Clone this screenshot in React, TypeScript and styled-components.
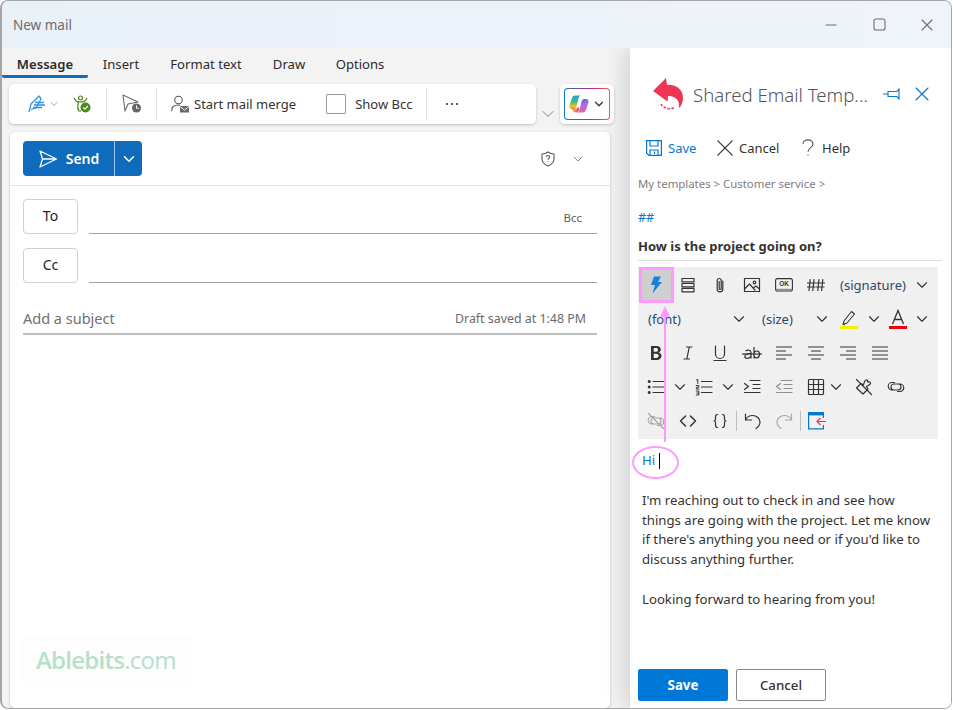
import React from "react";
import styled, { createGlobalStyle } from "styled-components";
import { ChevronDown } from "lucide-react";

const FONT = `"Noto Sans", "Open Sans", "Liberation Sans", sans-serif`;
const BLUE = "#0f6cbd";
const PANEL_BLUE = "#0078d7";
const INK = "#333333";

const GlobalStyle = createGlobalStyle`
  html, body {
    margin: 0;
    padding: 0;
    background: #ffffff;
    font-family: ${FONT};
    overflow: hidden;
  }
  * { box-sizing: border-box; }
`;

const Win = styled.div`
  position: relative;
  width: 952px;
  height: 709px;
  border: 1px solid #a6a6a6;
  border-left-width: 2px;
  border-radius: 8px;
  overflow: hidden;
  background: #f3f3f3;
  display: flex;
  flex-direction: column;
`;

const TitleBar = styled.div`
  height: 47px;
  flex: none;
  display: flex;
  align-items: center;
  padding: 0 0 0 11px;
  background: linear-gradient(90deg, #e9f1f8 0%, #eff3fa 100%);
`;

const WinTitle = styled.div`
  flex: 1;
  font-size: 13.5px;
  color: #6b6b6b;
`;

const WinBtn = styled.div`
  width: 48px;
  height: 24px;
  display: flex;
  align-items: center;
  justify-content: center;
  color: #6e6e6e;
`;

const Main = styled.div`
  flex: 1;
  display: flex;
  min-height: 0;
  overflow: hidden;
`;

const Left = styled.div`
  width: 628px;
  flex: none;
  display: flex;
  flex-direction: column;
`;

const Tabs = styled.div`
  height: 30px;
  display: flex;
  flex: none;
`;

const Tab = styled.div<{ $active?: boolean; $w: number }>`
  width: ${(p) => p.$w}px;
  height: 30px;
  display: flex;
  align-items: center;
  justify-content: center;
  padding-top: 5px;
  font-size: 13.1px;
  color: #2b2b2b;
  font-weight: ${(p) => (p.$active ? 600 : 400)};
  border-bottom: 3px solid ${(p) => (p.$active ? BLUE : "transparent")};
  border-radius: 0 0 2px 2px;
`;

const RibbonRow = styled.div`
  display: flex;
  align-items: flex-start;
  height: 40px;
  margin: 6px 0 8px 7px;
  flex: none;
`;

const Ribbon = styled.div`
  width: 527px;
  height: 40px;
  background: #ffffff;
  border-radius: 5px;
  box-shadow: 0 1px 3px rgba(0, 0, 0, 0.2);
  display: flex;
  align-items: center;
`;

const RibbonSlot = styled.div<{ $w: number; $ml?: number }>`
  width: ${(p) => p.$w}px;
  margin-left: ${(p) => p.$ml ?? 0}px;
  height: 100%;
  flex: none;
  display: flex;
  align-items: center;
  justify-content: center;
`;

const RibbonSep = styled.div`
  width: 1px;
  height: 32px;
  flex: none;
  background: #e2e2e2;
`;

const RibbonText = styled.span`
  font-size: 13px;
  color: #333;
  white-space: nowrap;
`;

const BccBox = styled.span`
  width: 20px;
  height: 20px;
  margin-right: 9px;
  border: 1px solid #999;
  border-radius: 1px;
`;

const Overflow = styled.div`
  width: 24px;
  height: 40px;
  flex: none;
  display: flex;
  align-items: flex-end;
  justify-content: center;
  color: #6a6a6a;
`;

const CopilotCard = styled.div`
  width: 54px;
  height: 40px;
  background: #fff;
  border-radius: 5px;
  box-shadow: 0 1px 3px rgba(0, 0, 0, 0.2);
  padding: 4px;
`;

const CopilotInner = styled.div`
  width: 46px;
  height: 32px;
  border-radius: 4px;
  border: 1px solid transparent;
  background:
    linear-gradient(#fff, #fff) padding-box,
    linear-gradient(90deg, #0f78d4, #b0278f 55%, #f2545b) border-box;
  display: flex;
  align-items: center;
  justify-content: center;
  gap: 3px;
  color: #333;
`;

const Composer = styled.div`
  position: relative;
  width: 600px;
  flex: 1;
  margin: 0 0 0 8px;
  background: #fff;
  border-radius: 5px;
  box-shadow: 0 1px 3px rgba(0, 0, 0, 0.2);
  overflow: hidden;
  padding: 0 13px;
`;

const SendRow = styled.div`
  height: 54px;
  margin: 0 -13px;
  padding: 9px 24px 0 13px;
  border-bottom: 1px solid #e1e1e1;
  display: flex;
  align-items: flex-start;
`;

const SendBtn = styled.div`
  width: 119px;
  height: 35px;
  border-radius: 4px;
  background: ${BLUE};
  color: #fff;
  display: flex;
  align-items: center;
  font-size: 14px;
  font-weight: 600;
`;

const SendMain = styled.div`
  width: 92px;
  height: 100%;
  display: flex;
  align-items: center;
  justify-content: center;
  gap: 8px;
  border-right: 1px solid #9cc3e6;
`;

const SendArrow = styled.div`
  flex: 1;
  display: flex;
  align-items: center;
  justify-content: center;
`;

const ShieldWrap = styled.div`
  margin-left: auto;
  height: 35px;
  display: flex;
  align-items: center;
  gap: 14px;
  color: #6a6a6a;
`;

const RecipientRow = styled.div<{ $first?: boolean }>`
  display: flex;
  height: 35px;
  margin-top: ${(p) => (p.$first ? 13 : 14)}px;
  gap: 11px;
`;

const RecipientBtn = styled.div`
  width: 55px;
  height: 35px;
  padding-bottom: 2px;
  border: 1px solid #d1d1d1;
  border-radius: 4px;
  display: flex;
  align-items: center;
  justify-content: center;
  font-size: 14px;
  color: #242424;
`;

const RecipientField = styled.div`
  flex: 1;
  height: 35px;
  border-bottom: 1.5px solid #a3a3a3;
  display: flex;
  justify-content: flex-end;
  padding: 11px 15px 0 0;
  font-size: 11.5px;
  color: #5c5c5c;
`;

const SubjectRow = styled.div`
  margin-top: 17px;
  height: 35px;
  padding: 3px 11px 0 0;
  display: flex;
  align-items: center;
  justify-content: space-between;
  border-bottom: 2px solid #bdbdbd;
`;

const SubjectHint = styled.span`
  font-size: 14.5px;
  color: #717171;
`;

const DraftNote = styled.span`
  font-size: 12.4px;
  color: #6a6a6a;
`;

const Watermark = styled.div`
  position: absolute;
  left: 12px;
  bottom: 26px;
  width: 171px;
  height: 46px;
  padding-left: 14px;
  background: #fdfdfd;
  display: flex;
  align-items: center;
  font-family: "Open Sans", sans-serif;
  font-size: 24px;
  letter-spacing: -0.75px;
  color: #b5e0cb;
`;

const WatermarkBold = styled.span`
  font-weight: 600;
`;

const Panel = styled.div`
  position: relative;
  flex: 1;
  background: #fff;
  box-shadow: -8px 0 18px rgba(0, 0, 0, 0.11);
  display: flex;
  flex-direction: column;
  padding: 0 8px;
`;

const PanelHead = styled.div`
  height: 88px;
  flex: none;
  display: flex;
  align-items: center;
  padding-left: 14px;
  padding-top: 4px;
`;

const PanelTitle = styled.div`
  flex: 1;
  margin-left: 9px;
  font-size: 18.6px;
  font-weight: 300;
  color: #555555;
  white-space: nowrap;
`;

const HeadIcons = styled.div`
  display: flex;
  align-items: center;
  gap: 14px;
  margin-right: 14px;
`;

const Actions = styled.div`
  height: 24px;
  margin-bottom: 16px;
  flex: none;
  display: flex;
  align-items: center;
  padding-left: 8px;
`;

const Action = styled.div<{ $w: number; $blue?: boolean }>`
  width: ${(p) => p.$w}px;
  display: flex;
  align-items: center;
  gap: 6px;
  font-size: 13px;
  color: ${(p) => (p.$blue ? PANEL_BLUE : INK)};
`;

const HelpLabel = styled.span`
  margin-left: 2px;
`;

const Crumbs = styled.div`
  font-size: 11.4px;
  line-height: 16px;
  color: #7d7d7d;
`;

const Hash = styled.div`
  margin-top: 18px;
  font-size: 12.5px;
  line-height: 16px;
  color: ${PANEL_BLUE};
`;

const Subject = styled.div`
  margin-top: 7px;
  height: 28px;
  padding-top: 4px;
  width: 304px;
  border-bottom: 1px solid #dddddd;
  font-size: 13px;
  font-weight: 700;
  color: ${INK};
`;

const Editor = styled.div`
  margin-top: 6px;
  width: 300px;
  height: 172px;
  flex: none;
  background: #f0f0f0;
  padding: 1px 2px;
`;

const EdRow = styled.div`
  height: 34px;
  display: flex;
  align-items: center;
`;

const Cell = styled.div<{ $w?: number; $ml?: number; $on?: boolean; $off?: boolean }>`
  width: ${(p) => p.$w ?? 32}px;
  height: 34px;
  flex: none;
  margin-left: ${(p) => p.$ml ?? 0}px;
  display: flex;
  align-items: center;
  justify-content: center;
  color: ${(p) => (p.$off ? "#a6a6a6" : "#333")};
  background: ${(p) => (p.$on ? "#cfcfcf" : "transparent")};

  svg {
    flex: none;
  }
`;

const Drop = styled.div<{ $w: number; $pl: number }>`
  width: ${(p) => p.$w}px;
  padding-left: ${(p) => p.$pl}px;
  flex: none;
  font-size: 13px;
  color: #2b4a6b;
  white-space: nowrap;
`;

const EdSep = styled.div`
  width: 1px;
  height: 20px;
  flex: none;
  background: #bdbdbd;
`;

const Body = styled.div`
  padding: 12px 0 0 4px;
  font-size: 13.2px;
  line-height: 19.7px;
  color: #333;
`;

const HiLine = styled.div`
  display: flex;
  align-items: center;
  height: 20px;
  margin-bottom: 20px;
  color: ${PANEL_BLUE};
`;

const Caret = styled.span`
  width: 1px;
  height: 16px;
  margin-left: 4px;
  background: #000;
`;

const Spaced = styled.p`
  margin: 0 0 19.7px;
  white-space: nowrap;
`;

const Footer = styled.div`
  margin-top: auto;
  margin-bottom: 7px;
  display: flex;
  gap: 8px;
`;

const FootBtn = styled.div<{ $primary?: boolean }>`
  width: 90px;
  height: 32px;
  border-radius: 2px;
  display: flex;
  align-items: center;
  justify-content: center;
  font-size: 13.3px;
  font-weight: ${(p) => (p.$primary ? 700 : 500)};
  color: ${(p) => (p.$primary ? "#fff" : "#333")};
  background: ${(p) => (p.$primary ? PANEL_BLUE : "#fff")};
  border: 1px solid ${(p) => (p.$primary ? PANEL_BLUE : "#8a8a8a")};
`;

/* pink annotations drawn over the task pane */
const MarkBox = styled.div`
  position: absolute;
  left: 9px;
  top: 219px;
  width: 35px;
  height: 36px;
  border: 3px solid #ff99ff;
`;

const MarkArrow = styled.svg`
  position: absolute;
  left: 27px;
  top: 258px;
  pointer-events: none;
`;

const MarkOval = styled.div`
  position: absolute;
  left: 2px;
  top: 398px;
  width: 47px;
  height: 33px;
  border: 2px solid #ff99ff;
  border-radius: 50%;
`;

type IconProps = { size?: number; color?: string; sw?: number; vb?: number; children: React.ReactNode };

const Ico = ({ size = 18, color = "currentColor", sw = 1.2, vb, children }: IconProps) => (
  <svg
    width={size}
    height={size}
    viewBox={`0 0 ${vb ?? size} ${vb ?? size}`}
    fill="none"
    stroke={color}
    strokeWidth={sw}
    strokeLinecap="round"
    strokeLinejoin="round"
  >
    {children}
  </svg>
);

const Chev = ({ size = 18, color = "#333", sw = 1.5 }: { size?: number; color?: string; sw?: number }) => (
  <ChevronDown size={size} color={color} strokeWidth={sw} />
);

const SendIcon = ({ color = "#fff", size = 20, sw = 1.3 }: { color?: string; size?: number; sw?: number }) => (
  <Ico size={size} vb={20} color={color} sw={sw}>
    <path d="M2 2 L18.5 10 L2 18 L4.5 10 Z M4.5 10 H18" />
  </Ico>
);

const CopilotIcon = () => (
  <svg width="20" height="18" viewBox="0 0 20 18">
    <defs>
      <linearGradient id="cpA" x1="0.3" y1="0" x2="0.4" y2="1">
        <stop offset="0" stopColor="#1f9fe8" />
        <stop offset="0.5" stopColor="#45c06e" />
        <stop offset="0.8" stopColor="#f2c230" />
        <stop offset="1" stopColor="#f0763a" />
      </linearGradient>
      <linearGradient id="cpB" x1="0.3" y1="0" x2="0.7" y2="1">
        <stop offset="0" stopColor="#2f6fe0" />
        <stop offset="0.45" stopColor="#b566e0" />
        <stop offset="1" stopColor="#f0609a" />
      </linearGradient>
      <linearGradient id="cpC" x1="0" y1="0" x2="1" y2="0">
        <stop offset="0" stopColor="#f2c230" />
        <stop offset="1" stopColor="#ee4b5c" />
      </linearGradient>
    </defs>
    <path d="M6.5 0.5 H12 C10.5 0.8 9.8 2 9.4 3.8 L7.4 11.5 C7 13.2 6 14 4.5 14 H3 C1 14 0 12.5 0.6 10.4 L3 3 C3.6 1.3 4.8 0.5 6.5 0.5 Z" fill="url(#cpA)" />
    <path d="M13.5 17.5 H8 C9.5 17.2 10.2 16 10.6 14.2 L12.6 6.5 C13 4.8 14 4 15.5 4 H17 C19 4 20 5.5 19.4 7.6 L17 15 C16.4 16.7 15.2 17.5 13.5 17.5 Z" fill="url(#cpB)" />
    <path d="M3 14 H6 C7.5 14 8.4 13.2 8.8 11.8 L10.2 13 C10 15.5 9.5 17 8 17.5 H6.5 C4.8 17.5 3.6 16 3 14 Z" fill="url(#cpC)" />
  </svg>
);

const ReplyLogo = () => (
  <svg width="32" height="34" viewBox="0 0 32 34" fill="none">
    <path
      d="M1 14 L14 1 L15 8 C23 7 31 12 31 21 C31 25 29.5 29 27 31 C28 25 25 19 16 19 L15.5 24.5 Z"
      fill="#ee3554"
    />
    <path d="M9 27 C11 31 17 33 22 31" stroke="#ee3554" strokeWidth="1.6" strokeDasharray="2.5 1.5" />
  </svg>
);

const LINK_D =
  "M7.5 4.5 H5 A3.7 3.7 0 0 0 5 12 H11 A3 3 0 0 0 11 6 H9 M10.5 13.5 H13 A3.7 3.7 0 0 0 13 6 H7 A3 3 0 0 0 7 12 H9";

const Tool = {
  bolt: (
    <svg width="12" height="18" viewBox="0 0 12 18">
      <path d="M4 0.5 H11 L8 6 H12 L2.5 17.5 L5 9 H1 Z" fill="#1681d9" />
    </svg>
  ),
  section: (
    <Ico>
      <rect x="3" y="2.5" width="12" height="3.4" />
      <rect x="3" y="7.5" width="12" height="3.4" />
      <rect x="3" y="12.4" width="12" height="3.4" />
    </Ico>
  ),
  clip: (
    <Ico>
      <path d="M11.8 5 V13 A2.8 2.8 0 0 1 6.2 13 V4.5 A2 2 0 0 1 10.2 4.5 V12.5 A1 1 0 0 1 8.2 12.5 V5.5" />
    </Ico>
  ),
  image: (
    <Ico>
      <rect x="1.5" y="2.5" width="15" height="13" />
      <circle cx="11.5" cy="6.5" r="1.3" />
      <path d="M1.5 13 L6.5 8 L12 14 M11 11.5 L13 10 L16.5 13" />
    </Ico>
  ),
  ok: (
    <svg width="18" height="14" viewBox="0 0 18 14" fill="none">
      <rect x="0.6" y="0.6" width="16.8" height="12.4" rx="2" stroke="#333" strokeWidth="1.1" />
      <path d="M1 11.6 H17" stroke="#8c8c8c" strokeWidth="1.6" />
      <text x="9" y="8.2" textAnchor="middle" fontSize="6.5" fontWeight="700" fontFamily="Liberation Sans, sans-serif" fill="#333">
        OK
      </text>
    </svg>
  ),
  hash: (
    <Ico>
      <path d="M3.2 3.5 L2 14.5 M7 3.5 L5.8 14.5 M0.5 7 H8.5 M0.5 11 H8 M12 3.5 L10.8 14.5 M15.8 3.5 L14.6 14.5 M9.5 7 H17.5 M9.3 11 H17" />
    </Ico>
  ),
  marker: (
    <svg width="18" height="20" viewBox="0 0 18 20" fill="none">
      <path d="M4 12 L11.5 2.5 L14.5 5 L7 14 L3 15.5 Z" stroke="#333" strokeWidth="1.1" strokeLinejoin="round" />
      <path d="M3 15 L5 16" stroke="#333" />
      <rect x="0" y="17" width="18" height="3" fill="#f5f000" />
    </svg>
  ),
  colorA: (
    <svg width="18" height="20" viewBox="0 0 18 20" fill="none">
      <path d="M3.5 15 L9 1.5 L14.5 15 M5.5 10.5 H12.5" stroke="#333" strokeWidth="1.3" />
      <rect x="0" y="17" width="18" height="3" fill="#e8000b" />
    </svg>
  ),
  italic: (
    <Ico>
      <path d="M7.5 3 H13 M5 15 H10.5 M10.3 3 L7.8 15" />
    </Ico>
  ),
  underline: (
    <Ico>
      <path d="M4.5 2 V10 A4.5 4.5 0 0 0 13.5 10 V2 M3 16.5 H15" />
    </Ico>
  ),
  bold: (
    <svg width="18" height="18" viewBox="0 0 18 18">
      <path
        fillRule="evenodd"
        d="M4 2 H9.5 C12.3 2 13.8 3.3 13.8 5.5 C13.8 7 13 8 11.6 8.4 C13.4 8.8 14.5 10 14.5 11.8 C14.5 14.4 12.6 16 9.8 16 H4 Z M6.7 4.1 V7.7 H8.8 C10.3 7.7 11 7 11 5.9 C11 4.7 10.2 4.1 8.8 4.1 Z M6.7 9.7 V13.9 H9.2 C10.8 13.9 11.7 13.2 11.7 11.8 C11.7 10.4 10.8 9.7 9 9.7 Z"
        fill="#333"
      />
    </svg>
  ),
  strike: (
    <svg width="20" height="18" viewBox="0 0 20 18" fill="none" stroke="#333" strokeWidth="1.2">
      <path d="M3.5 7 C5 5.6 9 5.6 9 8.5 V14.5 M9 9.5 C5 9.5 2.8 10.5 2.8 12.4 C2.8 14.8 7.5 15.2 9 12" />
      <path d="M12 3 V14.5 M12 9 C13 6.3 17.5 6 17.5 10.3 C17.5 14.8 13 14.8 12 12" />
      <path d="M0 10 H20" />
    </svg>
  ),
  left: (
    <Ico>
      <path d="M1.5 3 H16.5 M1.5 7 H10.5 M1.5 11 H16.5 M1.5 15 H10.5" />
    </Ico>
  ),
  center: (
    <Ico>
      <path d="M1.5 3 H16.5 M4.5 7 H13.5 M1.5 11 H16.5 M4.5 15 H13.5" />
    </Ico>
  ),
  right: (
    <Ico>
      <path d="M1.5 3 H16.5 M7.5 7 H16.5 M1.5 11 H16.5 M7.5 15 H16.5" />
    </Ico>
  ),
  justify: (
    <Ico>
      <path d="M1.5 3 H16.5 M1.5 7 H16.5 M1.5 11 H16.5 M1.5 15 H16.5" />
    </Ico>
  ),
  bullets: (
    <Ico>
      <path d="M6 3.5 H17 M6 9 H17 M6 14.5 H17" />
      <circle cx="2.2" cy="3.5" r="0.9" fill="#333" />
      <circle cx="2.2" cy="9" r="0.9" fill="#333" />
      <circle cx="2.2" cy="14.5" r="0.9" fill="#333" />
    </Ico>
  ),
  numbers: (
    <Ico>
      <path d="M6.5 3.5 H17 M6.5 9 H17 M6.5 14.5 H17" />
      <path d="M1.5 2 L2.8 1.4 V5.5 M1.2 7.5 H3.8 V9.3 H1.4 V11 H4 M1.2 13 H3.8 V17 H1.2 M1.8 15 H3.8" strokeWidth="1" />
    </Ico>
  ),
  indent: (
    <Ico>
      <path d="M7 2.5 H17 M10 6.5 H17 M10 10.5 H17 M1.5 14.5 H17 M1.5 5.5 L5.5 8.5 L1.5 11.5" />
    </Ico>
  ),
  outdent: (
    <Ico color="#8f8f8f">
      <path d="M6 2.5 H17 M9 6.5 H17 M9 10.5 H17 M1.5 14.5 H17 M5.5 5.5 L1.5 8.5 L5.5 11.5" />
    </Ico>
  ),
  table: (
    <Ico size={18}>
      <rect x="1.5" y="1.5" width="15" height="15" rx="1" />
      <path d="M6.5 1.5 V16.5 M11.5 1.5 V16.5 M1.5 6.5 H16.5 M1.5 11.5 H16.5" />
    </Ico>
  ),
  eraser: (
    <Ico>
      <path d="M1.5 1.5 L16.5 16.5" />
      <path d="M1.5 10 L6 5.5 L8.5 7 C9 5 9 3 11 2 C12.5 1.5 13 3 12.5 4 C14 3.5 16 4 15.5 5.5 C15 7 13.5 7.5 11.5 8.5 L13 11 L8 16 Z" />
    </Ico>
  ),
  link: (
    <Ico>
      <path d={LINK_D} />
    </Ico>
  ),
  unlink: (
    <Ico color="#a8a8a8">
      <path d="M1.5 1.5 L16.5 16.5" />
      <path d={LINK_D} />
    </Ico>
  ),
  code: (
    <Ico sw={1.5}>
      <path d="M6.5 4 L1.5 9 L6.5 14 M11.5 4 L16.5 9 L11.5 14" />
    </Ico>
  ),
  braces: (
    <Ico>
      <path d="M6.5 2.5 C4.5 2.5 4.5 3.5 4.5 5 V7.5 C4.5 8.5 4 9 3 9 C4 9 4.5 9.5 4.5 10.5 V13 C4.5 14.5 4.5 15.5 6.5 15.5 M11.5 2.5 C13.5 2.5 13.5 3.5 13.5 5 V7.5 C13.5 8.5 14 9 15 9 C14 9 13.5 9.5 13.5 10.5 V13 C13.5 14.5 13.5 15.5 11.5 15.5" />
    </Ico>
  ),
  undo: (
    <Ico>
      <path d="M1.5 2 V8 H7.5 M1.5 8 C3 5 5.5 3.5 8.5 3.5 C12.8 3.5 16 6.5 16 10 C16 12.8 14.5 14.8 12 16.5" />
    </Ico>
  ),
  redo: (
    <Ico color="#a8a8a8">
      <path d="M16.5 2 V8 H10.5 M16.5 8 C15 5 12.5 3.5 9.5 3.5 C5.2 3.5 2 6.5 2 10 C2 12.8 3.5 14.8 6 16.5" />
    </Ico>
  ),
  exit: (
    <svg width="18" height="18" viewBox="0 0 18 18" fill="none">
      <path d="M15.4 6 V0.6 H0.6 V16.8 H15.4 V13" stroke="#0078d7" strokeWidth="1.2" />
      <rect x="0.6" y="0.6" width="14.8" height="2.8" fill="#0078d7" />
      <path d="M18 9.5 H9 M12.5 6 L9 9.5 L12.5 13" stroke="#ee3554" strokeWidth="1.2" />
    </svg>
  ),
};

export default function App() {
  return (
    <>
      <GlobalStyle />
      <Win>
        <TitleBar>
          <WinTitle>New mail</WinTitle>
          <WinBtn>
            <Ico size={12} sw={1.1}>
              <path d="M1 6 H11" />
            </Ico>
          </WinBtn>
          <WinBtn>
            <Ico size={13} sw={1.1}>
              <rect x="1" y="1" width="11" height="11" rx="2" />
            </Ico>
          </WinBtn>
          <WinBtn>
            <Ico size={12} sw={1.1}>
              <path d="M1 1 L11 11 M11 1 L1 11" />
            </Ico>
          </WinBtn>
        </TitleBar>
        <Main>
          <Left>
            <Tabs>
              <Tab $active $w={86}>Message</Tab>
              <Tab $w={66}>Insert</Tab>
              <Tab $w={104}>Format text</Tab>
              <Tab $w={62}>Draw</Tab>
              <Tab $w={80}>Options</Tab>
            </Tabs>
            <RibbonRow>
              <Ribbon>
                <RibbonSlot $w={22} $ml={17}>
                  <svg width="18" height="18" viewBox="0 0 18 18" fill="none" stroke="#2f8fe0" strokeWidth="1.2" strokeLinejoin="round">
                    <path d="M1 17 L3 9 L11 1 C12 2 12.5 2.5 13 4 L8 13 L3 14.5" />
                    <path d="M7 7.5 H16 M6 10 H17 M5 12.5 H14" strokeWidth="1.5" />
                  </svg>
                </RibbonSlot>
                <RibbonSlot $w={12}>
                  <Chev size={16} color="#777" sw={1.3} />
                </RibbonSlot>
                <RibbonSlot $w={24} $ml={10}>
                  <svg width="18" height="18" viewBox="0 0 18 18" fill="none">
                    <circle cx="7.5" cy="3" r="2" stroke="#4c7a1a" strokeWidth="1.2" />
                    <path d="M1 3 C3 7 5 7 7.5 7 C10 7 12 7 14 3 M5 7 C6 10 3 12 6 16 H8" stroke="#4c7a1a" strokeWidth="1.2" />
                    <circle cx="12.5" cy="12.5" r="5" fill="#4c8a1a" />
                    <path d="M10.2 12.5 L12 14.2 L14.8 11" stroke="#fff" strokeWidth="1.2" />
                  </svg>
                </RibbonSlot>
                <RibbonSlot $w={12} />
                <RibbonSep />
                <RibbonSlot $w={49}>
                  <svg width="20" height="20" viewBox="0 0 20 20" fill="none">
                    <path d="M1 1 L16 8 L6 10 L3 17 Z M6 10 L16 8" stroke="#6a6a6a" strokeWidth="1.1" strokeLinejoin="round" />
                    <circle cx="14.5" cy="14" r="4.5" fill="#666" />
                    <path d="M14.5 11.5 V14.3 H16.8" stroke="#fff" strokeWidth="1" />
                  </svg>
                </RibbonSlot>
                <RibbonSep />
                <RibbonSlot $w={28} $ml={9}>
                  <svg width="18" height="18" viewBox="0 0 18 18" fill="none">
                    <circle cx="7.5" cy="5" r="3.8" stroke="#555" strokeWidth="1.1" />
                    <path d="M1 16 C0 12 3 10 7.5 10 L9 10" stroke="#555" strokeWidth="1.1" />
                    <rect x="9" y="11" width="9" height="6.5" fill="#6a6a6a" />
                    <path d="M9 11.5 L13.5 15 L18 11.5" stroke="#fff" strokeWidth="0.9" />
                  </svg>
                </RibbonSlot>
                <RibbonText>Start mail merge</RibbonText>
                <RibbonSlot $w={30} />
                <BccBox />
                <RibbonText>Show Bcc</RibbonText>
                <RibbonSlot $w={14} />
                <RibbonSep />
                <RibbonSlot $w={49}>
                  <svg width="14" height="4" viewBox="0 0 14 4">
                    <circle cx="2" cy="2" r="1.1" fill="#333" />
                    <circle cx="7" cy="2" r="1.1" fill="#333" />
                    <circle cx="12" cy="2" r="1.1" fill="#333" />
                  </svg>
                </RibbonSlot>
              </Ribbon>
              <Overflow>
                <Chev size={20} color="#777" sw={1.1} />
              </Overflow>
              <CopilotCard>
                <CopilotInner>
                  <CopilotIcon />
                  <Chev size={14} sw={2.2} />
                </CopilotInner>
              </CopilotCard>
            </RibbonRow>
            <Composer>
              <SendRow>
                <SendBtn>
                  <SendMain>
                    <SendIcon />
                    Send
                  </SendMain>
                  <SendArrow>
                    <Chev size={18} color="#fff" sw={2} />
                  </SendArrow>
                </SendBtn>
                <ShieldWrap>
                  <svg width="16" height="16" viewBox="0 0 16 16" fill="none">
                    <path d="M8 1 C6 2.5 4 3 2 3 V8 C2 11 4.5 13.5 8 15 C11.5 13.5 14 11 14 8 V3 C12 3 10 2.5 8 1 Z" stroke="#555" strokeWidth="1.1" />
                    <path d="M6.3 6 C6.3 4 9.7 4 9.7 6 C9.7 7.3 8 7.3 8 8.8 M8 10.5 V11" stroke="#555" strokeWidth="1.1" />
                  </svg>
                  <Chev size={16} color="#777" sw={1.3} />
                </ShieldWrap>
              </SendRow>
              <RecipientRow $first>
                <RecipientBtn>To</RecipientBtn>
                <RecipientField>Bcc</RecipientField>
              </RecipientRow>
              <RecipientRow>
                <RecipientBtn>Cc</RecipientBtn>
                <RecipientField />
              </RecipientRow>
              <SubjectRow>
                <SubjectHint>Add a subject</SubjectHint>
                <DraftNote>Draft saved at 1:48 PM</DraftNote>
              </SubjectRow>
              <Watermark>
                <WatermarkBold>Ablebits</WatermarkBold>.com
              </Watermark>
            </Composer>
          </Left>
          <Panel>
            <PanelHead>
              <ReplyLogo />
              <PanelTitle>Shared Email Temp...</PanelTitle>
              <HeadIcons>
                <svg width="18" height="12" viewBox="0 0 18 12" fill="none" stroke="#0078d7" strokeWidth="1.1">
                  <path d="M0 6 H5 M5 3.5 H14 L16 1 V11 L14 8.5 H5 Z" />
                </svg>
                <Ico size={14} color="#0078d7" sw={1.1}>
                  <path d="M1 1 L13 13 M13 1 L1 13" />
                </Ico>
              </HeadIcons>
            </PanelHead>
            <Actions>
              <Action $w={71} $blue>
                <svg width="16" height="16" viewBox="0 0 16 16" fill="none" stroke="#0078d7" strokeWidth="1.2">
                  <path d="M0.6 0.6 H15.4 V15.4 H3 L0.6 13 Z M4 0.6 V6 H12 V0.6 M4 15.4 V10 H12 V15.4 M8.5 11.5 V14" />
                </svg>
                Save
              </Action>
              <Action $w={85}>
                <Ico size={16} color="#333" sw={1.2}>
                  <path d="M0.8 0.8 L15.2 15.2 M15.2 0.8 L0.8 15.2" />
                </Ico>
                Cancel
              </Action>
              <Action $w={60}>
                <svg width="12" height="18" viewBox="0 0 12 18" fill="none" stroke="#555" strokeWidth="1.1">
                  <path d="M1 5 C1 -0.5 11 -0.5 11 5 C11 8.5 6 8.5 6 13 M6 15.5 V16.8" />
                </svg>
                <HelpLabel>Help</HelpLabel>
              </Action>
            </Actions>
            <Crumbs>My templates &gt; Customer service &gt;</Crumbs>
            <Hash>##</Hash>
            <Subject>How is the project going on?</Subject>
            <Editor>
              <EdRow>
                <Cell $on>{Tool.bolt}</Cell>
                <Cell>{Tool.section}</Cell>
                <Cell>{Tool.clip}</Cell>
                <Cell>{Tool.image}</Cell>
                <Cell>{Tool.ok}</Cell>
                <Cell>{Tool.hash}</Cell>
                <Drop $w={82} $pl={8}>(signature)</Drop>
                <Cell $w={16}><Chev /></Cell>
              </EdRow>
              <EdRow>
                <Drop $w={91} $pl={8}>(font)</Drop>
                <Cell $w={16}><Chev /></Cell>
                <Drop $w={67} $pl={15}>(size)</Drop>
                <Cell $w={16}><Chev /></Cell>
                <Cell $ml={3}>{Tool.marker}</Cell>
                <Cell $w={16} $ml={1}><Chev /></Cell>
                <Cell>{Tool.colorA}</Cell>
                <Cell $w={16}><Chev /></Cell>
              </EdRow>
              <EdRow>
                <Cell>{Tool.bold}</Cell>
                <Cell>{Tool.italic}</Cell>
                <Cell>{Tool.underline}</Cell>
                <Cell>{Tool.strike}</Cell>
                <Cell>{Tool.left}</Cell>
                <Cell>{Tool.center}</Cell>
                <Cell>{Tool.right}</Cell>
                <Cell>{Tool.justify}</Cell>
              </EdRow>
              <EdRow>
                <Cell>{Tool.bullets}</Cell>
                <Cell $w={16}><Chev /></Cell>
                <Cell>{Tool.numbers}</Cell>
                <Cell $w={16}><Chev /></Cell>
                <Cell>{Tool.indent}</Cell>
                <Cell>{Tool.outdent}</Cell>
                <Cell>{Tool.table}</Cell>
                <Cell $w={8}><Chev /></Cell>
                <Cell $ml={8}>{Tool.eraser}</Cell>
                <Cell>{Tool.link}</Cell>
              </EdRow>
              <EdRow>
                <Cell>{Tool.unlink}</Cell>
                <Cell>{Tool.code}</Cell>
                <Cell>{Tool.braces}</Cell>
                <EdSep />
                <Cell $w={31}>{Tool.undo}</Cell>
                <Cell>{Tool.redo}</Cell>
                <EdSep />
                <Cell $w={31}>{Tool.exit}</Cell>
              </EdRow>
            </Editor>
            <Body>
              <HiLine>
                Hi
                <Caret />
              </HiLine>
              <Spaced>
                I'm reaching out to check in and see how
                <br />
                things are going with the project. Let me know
                <br />
                if there's anything you need or if you'd like to
                <br />
                discuss anything further.
              </Spaced>
              <Spaced>Looking forward to hearing from you!</Spaced>
            </Body>
            <Footer>
              <FootBtn $primary>Save</FootBtn>
              <FootBtn>Cancel</FootBtn>
            </Footer>
            <MarkBox />
            <MarkArrow width="16" height="136" viewBox="0 0 16 136">
              <path d="M8 0 L13 11 H9 V136 H7 V11 H3 Z" fill="#ff99ff" />
            </MarkArrow>
            <MarkOval />
          </Panel>
        </Main>
      </Win>
    </>
  );
}
